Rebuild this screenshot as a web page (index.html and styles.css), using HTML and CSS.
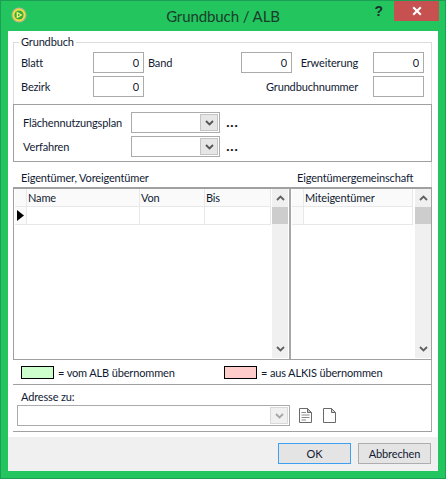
FILE: index.html
```html
<!DOCTYPE html>
<html lang="de">
<head>
<meta charset="utf-8">
<title>Grundbuch / ALB</title>
<link rel="stylesheet" href="styles.css">
</head>
<body>
<div class="window">
  <header class="titlebar">
    <div class="tb-left">
      <svg class="app-icon" width="16" height="16" viewBox="0 0 16 16">
        <circle cx="8" cy="8" r="7.5" fill="#b9b48c"/>
        <circle cx="8" cy="8" r="6.2" fill="#f2e23a"/>
        <circle cx="8" cy="8" r="4.6" fill="#2fae3c"/>
        <path d="M5.6 4.6 L11.6 8 L5.6 11.4 Z" fill="#f6f07a"/>
        <path d="M7 6.8 L9.4 8 L7 9.2 Z" fill="#3fb23f"/>
      </svg>
    </div>
    <div class="tb-title">Grundbuch / ALB</div>
    <div class="tb-right">
      <span class="help">?</span>
      <button class="close" type="button" aria-label="Schließen">
        <svg width="10" height="10" viewBox="0 0 10 10"><path d="M1.2 1.2 L8.8 8.8 M8.8 1.2 L1.2 8.8" stroke="#fff" stroke-width="2.1" fill="none"/></svg>
      </button>
    </div>
  </header>

  <div class="client">
    <div class="content">
      <fieldset class="gb">
        <legend>Grundbuch</legend>
        <div class="gb-grid">
          <label>Blatt</label><input class="num" value="0">
          <label class="band">Band</label><input class="num" value="0">
          <label class="rlabel">Erweiterung</label><input class="num" value="0">
          <label>Bezirk</label><input class="num" value="0">
          <label class="rlabel c5">Grundbuchnummer</label><input class="num" value="">
        </div>
      </fieldset>

      <section class="plan">
        <label>Flächennutzungsplan</label>
        <div class="combo"><span class="combo-btn"><svg width="9" height="6" viewBox="0 0 9 6"><path d="M1 1 L4.5 4.5 L8 1" stroke="#555" stroke-width="1.8" fill="none"/></svg></span></div>
        <span class="dots">...</span>
        <label>Verfahren</label>
        <div class="combo"><span class="combo-btn"><svg width="9" height="6" viewBox="0 0 9 6"><path d="M1 1 L4.5 4.5 L8 1" stroke="#555" stroke-width="1.8" fill="none"/></svg></span></div>
        <span class="dots">...</span>
      </section>

      <div class="captions">
        <span class="cap-left">Eigentümer, Voreigentümer</span>
        <span>Eigentümergemeinschaft</span>
      </div>

      <section class="panes">
        <div class="pane pane-l">
          <div class="tbl tbl-l">
            <div class="hd rh"></div><div class="hd">Name</div><div class="hd">Von</div><div class="hd">Bis</div>
            <div class="cell rh"><svg width="7" height="11" viewBox="0 0 7 11"><path d="M0 0 L7 5.5 L0 11 Z" fill="#000"/></svg></div><div class="cell"></div><div class="cell"></div><div class="cell"></div>
          </div>
          <div class="sb">
            <span class="sb-btn"><svg width="9" height="6" viewBox="0 0 9 6"><path d="M1 5 L4.5 1.5 L8 5" stroke="#606060" stroke-width="1.8" fill="none"/></svg></span>
            <span class="sb-thumb"></span>
            <span class="sb-btn sb-end"><svg width="9" height="6" viewBox="0 0 9 6"><path d="M1 1 L4.5 4.5 L8 1" stroke="#606060" stroke-width="1.8" fill="none"/></svg></span>
          </div>
        </div>
        <div class="pane pane-r">
          <div class="tbl tbl-r">
            <div class="hd rh"></div><div class="hd">Miteigentümer</div>
            <div class="cell rh"></div><div class="cell"></div>
          </div>
          <div class="sb">
            <span class="sb-btn"><svg width="9" height="6" viewBox="0 0 9 6"><path d="M1 5 L4.5 1.5 L8 5" stroke="#606060" stroke-width="1.8" fill="none"/></svg></span>
            <span class="sb-thumb"></span>
            <span class="sb-btn sb-end"><svg width="9" height="6" viewBox="0 0 9 6"><path d="M1 1 L4.5 4.5 L8 1" stroke="#606060" stroke-width="1.8" fill="none"/></svg></span>
          </div>
        </div>
      </section>

      <section class="keys">
        <div class="key key-alb"><span class="swatch sw-green"></span><span>= vom ALB übernommen</span></div>
        <div class="key"><span class="swatch sw-pink"></span><span>= aus ALKIS übernommen</span></div>
      </section>

      <section class="addr">
        <div class="addr-label">Adresse zu:</div>
        <div class="addr-row">
          <div class="combo combo-wide"><span class="combo-btn off"><svg width="9" height="6" viewBox="0 0 9 6"><path d="M1 1 L4.5 4.5 L8 1" stroke="#a6a6a6" stroke-width="1.8" fill="none"/></svg></span></div>
          <svg class="doc" width="13" height="15" viewBox="0 0 13 15">
            <path d="M0.5 0.5 H8.5 L12.5 4.5 V14.5 H0.5 Z" fill="#fff" stroke="#6a6a6a"/>
            <path d="M8.5 0.5 V4.5 H12.5 Z" fill="#bdbdbd" stroke="#6a6a6a"/>
            <path d="M2.5 4.5 H7 M2.5 7 H10.5 M2.5 9.5 H10.5 M2.5 12 H7" stroke="#8a8a8a"/>
          </svg>
          <svg class="doc doc2" width="13" height="15" viewBox="0 0 13 15">
            <path d="M0.5 0.5 H8.5 L12.5 4.5 V14.5 H0.5 Z" fill="#fff" stroke="#6a6a6a"/>
            <path d="M8.5 0.5 V4.5 H12.5 Z" fill="#d5d5d5" stroke="#6a6a6a"/>
          </svg>
        </div>
      </section>
    </div>
    <footer class="footer">
      <button class="btn btn-default" type="button">OK</button>
      <button class="btn" type="button">Abbrechen</button>
    </footer>
  </div>
</div>
</body>
</html>
```
FILE: styles.css
```css
* { box-sizing: border-box; }
html, body { margin: 0; padding: 0; }
body {
  width: 446px;
  height: 479px;
  overflow: hidden;
  font-family: Lato, Roboto, sans-serif;
  font-size: 11px;
  letter-spacing: -0.15px;
  color: #111a33;
}
.window {
  width: 446px;
  height: 479px;
  background: #22c55e;
  border: 1px solid #1c9e54;
  display: flex;
  flex-direction: column;
}
.titlebar {
  height: 30px;
  flex: none;
  display: grid;
  grid-template-columns: 1fr auto 1fr;
}
.tb-left { padding: 6px 0 0 10px; }
.app-icon { display: block; }
.tb-title {
  font-size: 15px;
  letter-spacing: -0.1px;
  line-height: 20px;
  padding-top: 5px;
  color: #1b3d2b;
}
.tb-right {
  display: flex;
  justify-content: flex-end;
  align-items: flex-start;
  padding-right: 6px;
}
.help {
  font-family: "Liberation Sans", sans-serif;
  font-weight: bold;
  font-size: 14px;
  line-height: 20px;
  color: #1d2f2a;
  margin-right: 11px;
}
.close {
  width: 45px;
  height: 20px;
  padding: 0;
  border: 0;
  background: #c75050;
  display: flex;
  align-items: center;
  justify-content: center;
}
.client {
  width: 430px;
  height: 440px;
  margin-left: 7px;
  background: #fff;
  display: flex;
  flex-direction: column;
}
.content {
  flex: 1;
  padding: 3px 6px 0 5px;
  min-height: 0;
}
label { white-space: nowrap; }

/* Grundbuch group */
.gb {
  margin: 0;
  padding: 2px 7px 7px;
  border: 1px solid #dcdcdc;
  border-bottom: 0;
  min-width: 0;
}
.gb legend {
  padding: 0 2px;
  margin-left: -2px;
  line-height: 16px;
}
.gb-grid {
  display: grid;
  grid-template-columns: 72px 51px 97px 51px 81px 51px;
  grid-auto-rows: 21px;
  row-gap: 3px;
  align-items: center;
}
.band { padding-left: 4px; }
.rlabel { text-align: right; padding-right: 15px; }
.c5 { grid-column: 5; }
.gb-grid .c5 { justify-self: end; }
input {
  font: inherit;
  letter-spacing: inherit;
  color: inherit;
  height: 21px;
  width: 100%;
  border: 1px solid #ababab;
  background: #fff;
  padding: 0 4px;
  margin: 0;
  text-align: right;
  outline: none;
}

/* Plan box */
.plan {
  height: 58px;
  border: 1px solid #a0a0a0;
  padding: 7px 0 0 9px;
  display: grid;
  grid-template-columns: 108px 89px auto;
  grid-auto-rows: 21px;
  row-gap: 3px;
  justify-content: start;
  align-items: center;
}
.combo {
  height: 21px;
  border: 1px solid #ababab;
  background: #fff;
  display: flex;
  justify-content: flex-end;
  padding: 1px;
}
.combo-btn {
  width: 18px;
  height: 17px;
  background: #e6e6e6;
  border: 1px solid #c4c4c4;
  display: flex;
  align-items: center;
  justify-content: center;
}
.combo-btn.off { background: #f0f0f0; border-color: #d9d9d9; }
.dots {
  font-family: "Open Sans", sans-serif;
  font-weight: 700;
  font-size: 13px;
  line-height: 13px;
  margin-left: 6px;
  color: #111;
  letter-spacing: 0.4px;
}

/* Captions */
.captions {
  height: 25px;
  border-right: 1px solid #dcdcdc;
  display: flex;
  align-items: flex-end;
  padding: 0 0 1px 8px;
  line-height: 17px;
}
.cap-left { width: 276px; }

/* Panes */
.panes {
  height: 173px;
  border: 1px solid #a0a0a0;
  border-top-width: 2px;
  display: flex;
}
.pane { display: flex; height: 100%; }
.pane-l { width: 277px; padding-left: 1px; padding-right: 1px; border-right: 2px solid #a8a8a8; }
.pane-r { flex: 1; padding-left: 1px; }
.tbl {
  display: grid;
  grid-auto-rows: 18px;
  align-content: start;
}
.tbl-l { width: 256px; grid-template-columns: 12px 113px 65px 66px; }
.tbl-r { width: 121px; grid-template-columns: 12px 109px; margin-right: 2px; }
.hd, .cell {
  border-right: 1px solid #e8e8e8;
  border-bottom: 1px solid #e8e8e8;
  padding-left: 1px;
  line-height: 17px;
  background: #fff;
}
.hd { background: #fafafa; }
.rh { background: #fafafa; padding: 0; display: flex; align-items: center; justify-content: center; }
.sb {
  width: 16px;
  margin-left: 1px;
  height: 169px;
  background: #f0f0f0;
  display: flex;
  flex-direction: column;
  flex: none;
}
.tbl-r + .sb { margin-left: 0; }
.sb-btn {
  height: 18px;
  flex: none;
  display: flex;
  align-items: center;
  justify-content: center;
}
.sb-thumb { height: 17px; background: #cdcdcd; flex: none; }
.sb-end { margin-top: auto; }

/* Legend */
.keys {
  height: 25px;
  border-right: 1px solid #a8a8a8;
  border-bottom: 1px solid #a0a0a0;
  display: flex;
  align-items: center;
  padding-left: 8px;
}
.key { display: flex; align-items: center; gap: 4px; }
.key-alb { width: 203px; }
.swatch { width: 33px; height: 13px; border: 1px solid #000; }
.sw-green { background: #ccffcc; }
.sw-pink { background: #ffcccc; }

/* Address */
.addr {
  height: 47px;
  border-right: 1px solid #a8a8a8;
  border-bottom: 1px solid #a0a0a0;
  padding: 3px 0 0 4px;
}
.addr-label { padding-left: 4px; line-height: 17px; height: 17px; }
.addr-row { display: flex; align-items: center; }
.combo-wide { width: 273px; }
.doc { margin-left: 9px; flex: none; }
.doc2 { margin-left: 11px; }

/* Footer */
.footer {
  height: 34px;
  flex: none;
  background: #f0f0f0;
  padding: 6px 7px 0 0;
  display: flex;
  justify-content: flex-end;
  align-items: flex-start;
  gap: 7px;
}
.btn {
  width: 73px;
  height: 21px;
  font: inherit;
  letter-spacing: inherit;
  color: inherit;
  background: #e4e4e4;
  border: 1px solid #adadad;
  padding: 0;
}
.btn-default { border-color: #3f9ff0; }
```
